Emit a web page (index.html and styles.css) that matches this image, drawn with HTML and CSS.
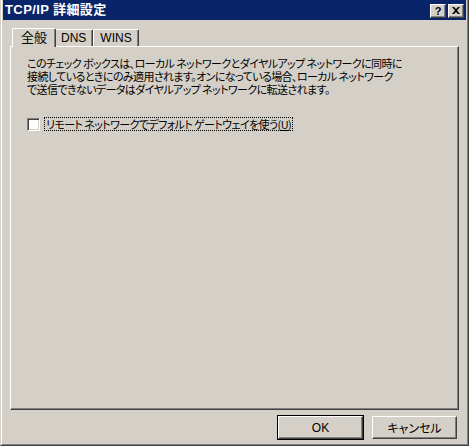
FILE: index.html
```html
<!DOCTYPE html>
<html lang="ja">
<head>
<meta charset="utf-8">
<title>TCP/IP 詳細設定</title>
<link rel="stylesheet" href="styles.css">
</head>
<body>
<div class="window">
  <div class="frame">
    <div class="titlebar">
      <span class="title">TCP/IP 詳細設定</span>
      <div class="caption-buttons">
        <span class="cbtn help">?</span>
        <span class="cbtn close">
          <svg width="8" height="7" viewBox="0 0 8 7"><path d="M0 0h2l2 2 2-2h2L5 3.5 8 7H6L4 5 2 7H0l3-3.5z" fill="#000"/></svg>
        </span>
      </div>
    </div>
    <div class="tabs">
      <span class="tab active">全般</span>
      <span class="tab">DNS</span>
      <span class="tab">WINS</span>
    </div>
    <div class="panel">
      <p class="desc">このチェック ボックスは、ローカル ネットワークとダイヤルアップ ネットワークに同時に<br>接続しているときにのみ適用されます。オンになっている場合、ローカル ネットワーク<br>で送信できないデータはダイヤルアップ ネットワークに転送されます。</p>
      <label class="check">
        <span class="box"></span>
        <span class="label-text">リモート ネットワークでデフォルト ゲートウェイを使う(<u>U</u>)</span>
      </label>
    </div>
    <div class="buttons">
      <span class="btn default">OK</span>
      <span class="btn">キャンセル</span>
    </div>
  </div>
</div>
</body>
</html>
```
FILE: styles.css
```css
html, body {
  margin: 0;
  padding: 0;
  background: #d4d0c8;
}
body {
  font-family: "Noto Sans CJK JP", "Liberation Sans", sans-serif;
  font-size: 12px;
  color: #000;
  font-feature-settings: "palt";
}
.window {
  width: 469px;
  height: 446px;
  box-sizing: border-box;
  border-style: solid;
  border-width: 0 1px 1px 1px;
  border-color: #d4d0c8 #404040 #404040 #d4d0c8;
}
.frame {
  height: 100%;
  box-sizing: border-box;
  border-style: solid;
  border-width: 0 1px 1px 1px;
  border-color: #fff #808080 #808080 #fff;
  padding: 0 1px 1px 1px;
  display: flex;
  flex-direction: column;
}
.titlebar {
  height: 20px;
  background: #0a246a;
  display: flex;
  align-items: center;
  justify-content: space-between;
  padding: 0 2px 0 2px;
}
.title {
  color: #fff;
  font-weight: bold;
  font-size: 13px;
  line-height: 14px;
  font-family: "Liberation Sans", "Noto Sans CJK JP", sans-serif;
  letter-spacing: 0.4px;
}
.caption-buttons {
  display: flex;
  gap: 2px;
  margin-top: 1px;
}
.cbtn {
  width: 16px;
  height: 14px;
  box-sizing: border-box;
  background: #d4d0c8;
  border: 1px solid;
  border-color: #fff #404040 #404040 #fff;
  box-shadow: inset -1px -1px 0 #808080;
  display: flex;
  align-items: center;
  justify-content: center;
  font-family: "Liberation Sans", sans-serif;
  font-weight: bold;
  font-size: 11px;
  line-height: 12px;
}
.tabs {
  display: flex;
  align-items: flex-end;
  height: 26px;
  padding-left: 9px;
}
.tab {
  height: 17px;
  box-sizing: border-box;
  border: 1px solid;
  border-color: #fff #404040 transparent #fff;
  border-bottom: none;
  box-shadow: inset -1px 0 0 #808080;
  border-radius: 2px 2px 0 0;
  padding: 0 6px;
  font-family: "Liberation Sans", "Noto Sans CJK JP", sans-serif;
  font-size: 12px;
  line-height: 16px;
}
.tab.active {
  height: 19px;
  padding: 1px 8px 0 8px;
  margin-right: -2px;
  margin-bottom: -1px;
  background: #d4d0c8;
  position: relative;
  z-index: 1;
  font-size: 13px;
}
.panel {
  margin: 0 7px;
  height: 364px;
  box-sizing: border-box;
  border: 1px solid;
  border-color: #fff #404040 #404040 #fff;
  box-shadow: inset -1px -1px 0 #808080;
  padding: 10px 16px 0 16px;
}
.desc {
  margin: 0;
  line-height: 13px;
  font-size: 11px;
  letter-spacing: -0.6px;
  white-space: nowrap;
}
.check {
  display: flex;
  align-items: center;
  margin-top: 21px;
  gap: 4px;
}
.box {
  width: 13px;
  height: 13px;
  box-sizing: border-box;
  background: #fff;
  border: 1px solid;
  border-color: #808080 #fff #fff #808080;
  box-shadow: inset 1px 1px 0 #404040, inset -1px -1px 0 #d4d0c8;
}
.label-text {
  border: 1px dotted #000;
  padding: 0 1px;
  font-size: 11px;
  line-height: 12px;
  letter-spacing: -0.6px;
  white-space: nowrap;
}
.buttons {
  display: flex;
  justify-content: flex-end;
  gap: 9px;
  padding: 6px 9px 0 0;
}
.btn {
  width: 85px;
  height: 23px;
  box-sizing: border-box;
  border: 1px solid;
  border-color: #fff #404040 #404040 #fff;
  box-shadow: inset -1px -1px 0 #808080;
  display: flex;
  align-items: center;
  justify-content: center;
  font-family: "Liberation Sans", "Noto Sans CJK JP", sans-serif;
  font-size: 12px;
}
.btn.default {
  outline: 1px solid #000;
}
```
